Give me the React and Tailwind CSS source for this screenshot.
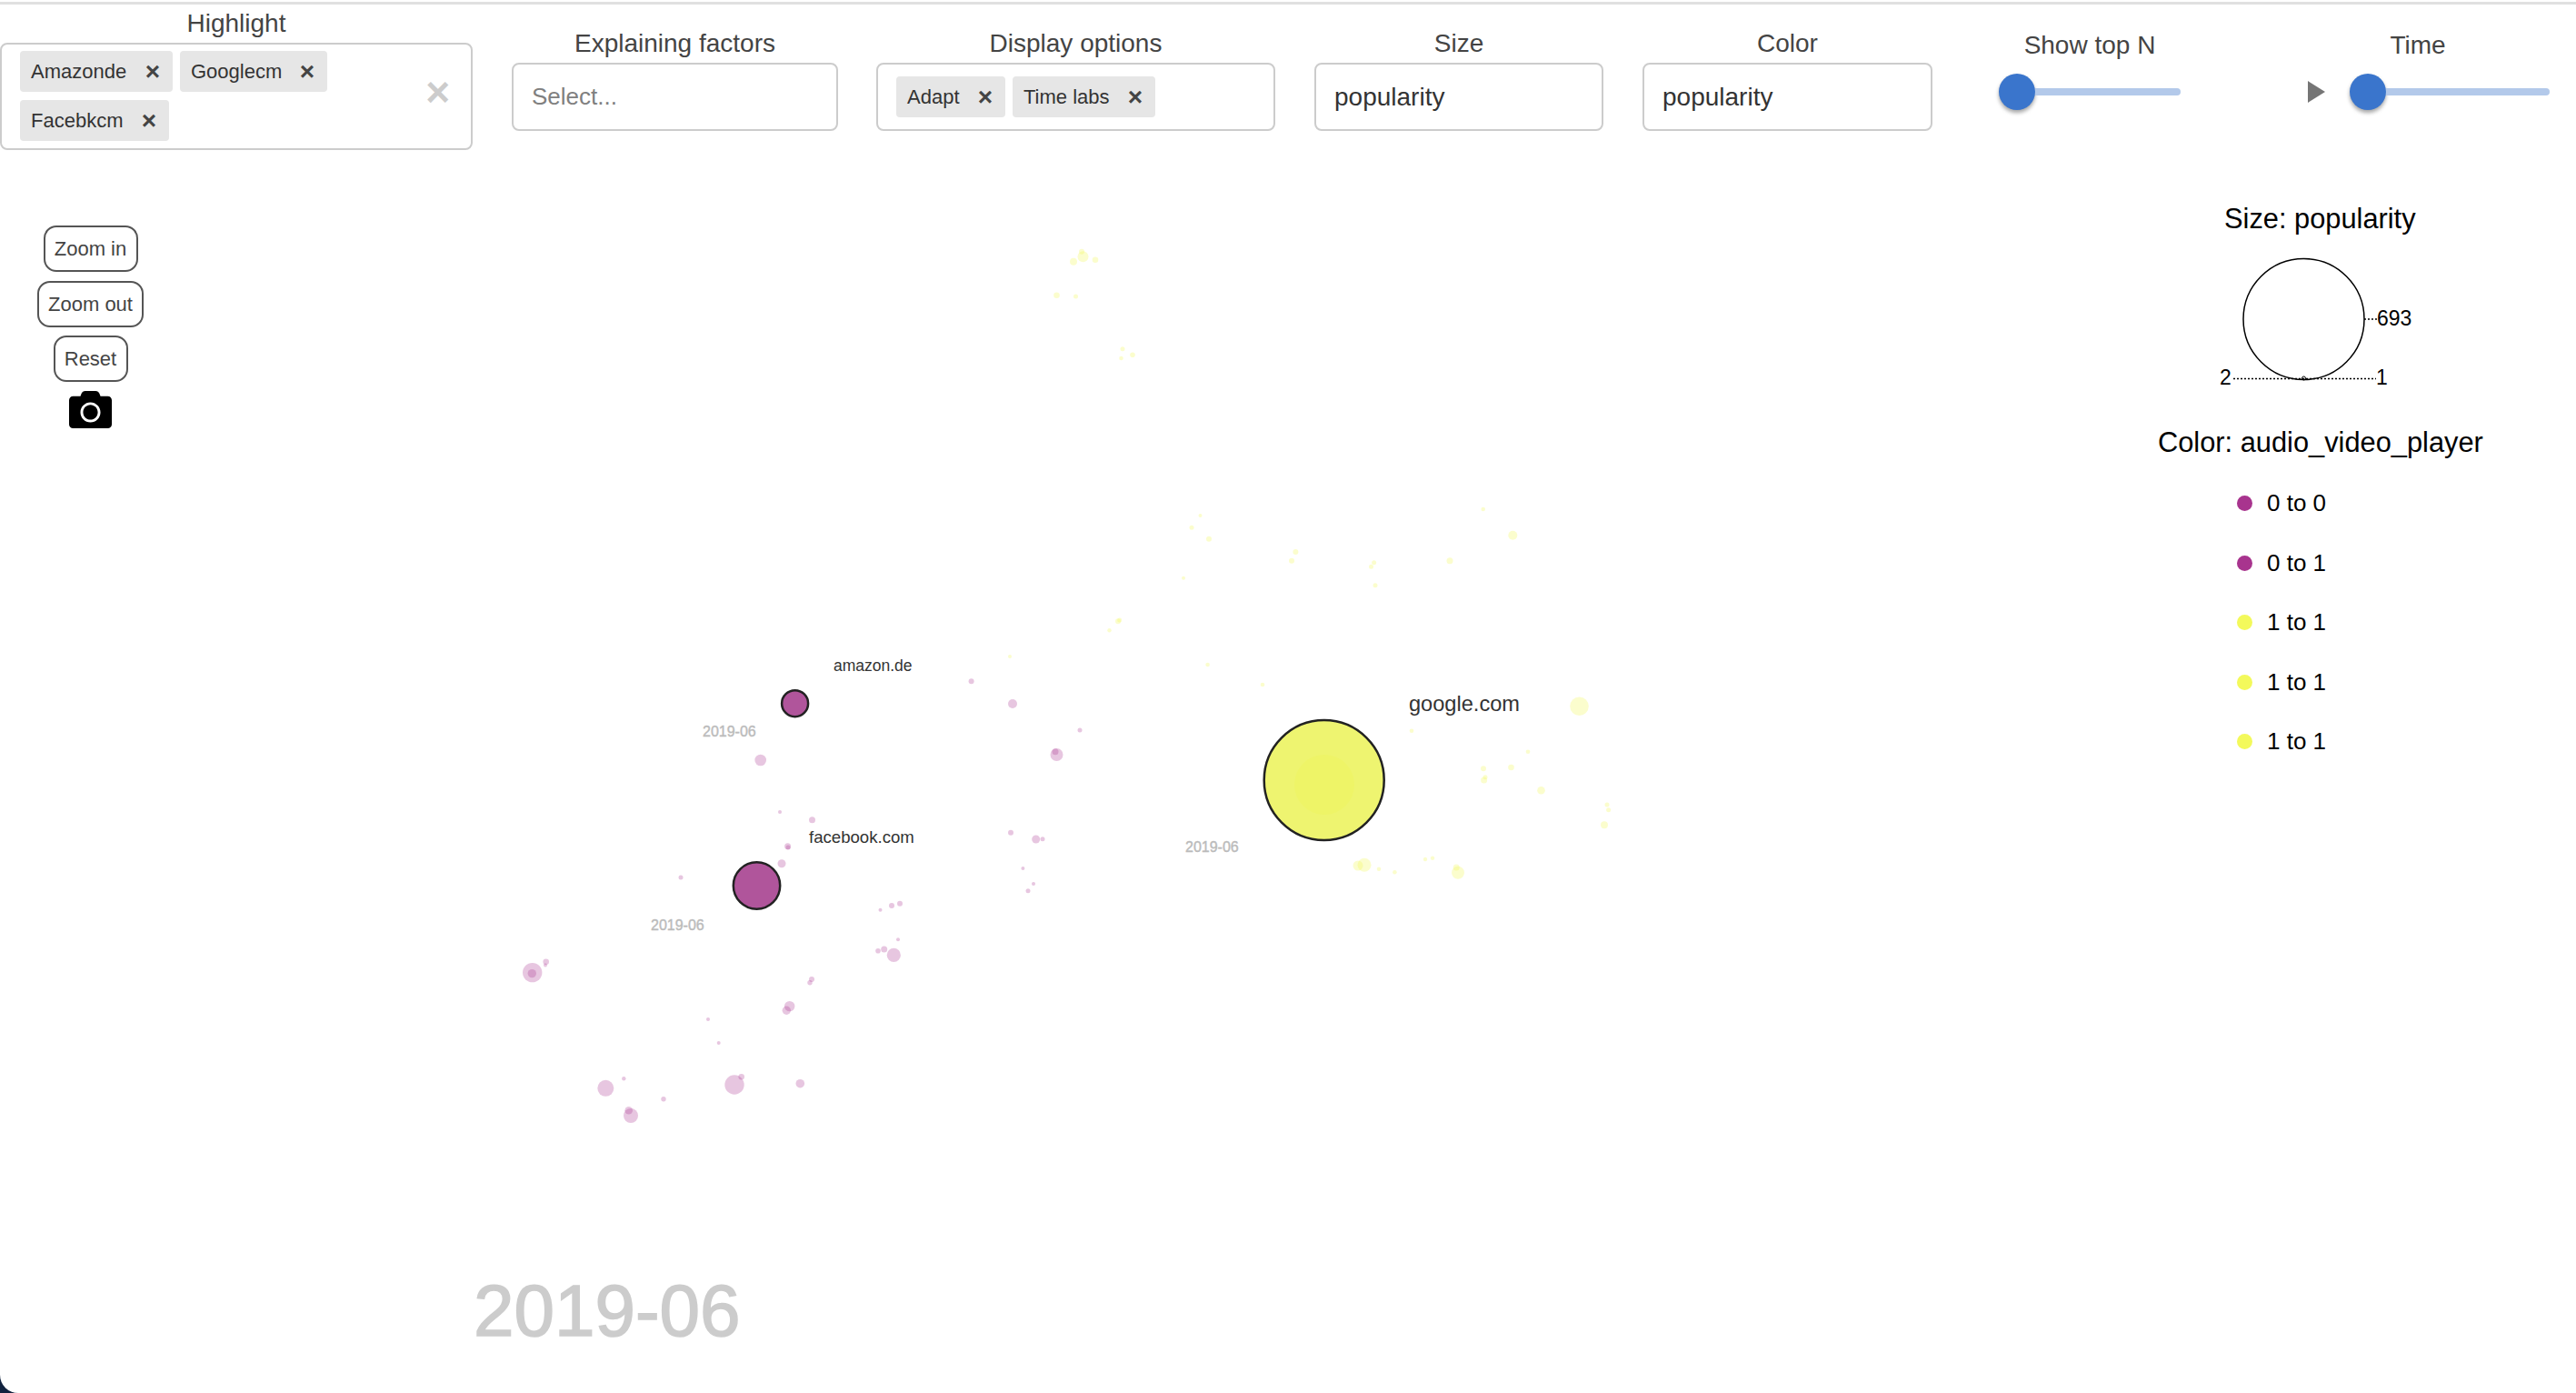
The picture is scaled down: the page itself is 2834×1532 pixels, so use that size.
import React from "react";
import { FaCamera } from "react-icons/fa";

const purple = [
  [836.7,836,6.3],[1068.6,749.3,3],[1114,774,5],[1188,803,2.5],[1162.5,830,7],[1161,826.7,3.5],
  [858,893,2],[893.5,901.7,3.5],[866.6,930.7,3.5],[867,932,2.5],[860,949.7,4.5],[749,965,2.5],
  [1112,915.7,3],[1139.7,923,4.5],[1147,922.7,2.5],[1125.4,955,2],[1137,972,2],[1131,979.7,2.5],
  [968.5,1000.7,2],[981,996,3],[990,993.7,3],[988,1033.3,2],[966,1045.8,2.8],[972.7,1044,3.5],[983.3,1050.4,7.6],
  [585.7,1069.6,10.7],[585.3,1070.6,4.7],[600.7,1057.7,3.3],[600,1061.4,2],
  [893,1077,3],[891,1080.8,2.7],[868.7,1106.6,5.7],[865.3,1111.3,4.7],[779,1121,2],[790.7,1147,2],
  [666.3,1196.8,9],[686.3,1186.3,2.2],[694,1227,8],[691.7,1221.2,4.3],[730,1208.7,2.7],[808,1193,10.7],[815.7,1184.3,3.3],[880.3,1191.7,4.8],
];

const yellow = [
  [1191.5,282.3,6],[1190,276.7,3],[1181,287.7,4],[1205,285.7,3.3],[1162.5,324.7,3.3],[1183.5,326,2.5],
  [1235,383.7,2.5],[1246,390.3,2.8],[1233.5,394,2.3],[1320.5,567,2],[1311,580.3,2.5],[1330,592.7,3],
  [1425.4,607,3],[1421,616.7,3],[1511.6,618.7,2.5],[1508.5,623.3,2.5],[1513,643.7,2.5],[1302,635.7,2],
  [1230,683.3,3],[1231.7,682,2.5],[1220.5,693.3,2.2],[1631.7,560,2.3],[1664.3,588.7,5],[1595,616.7,3.5],
  [1111,722,2],[1328.6,731,2.3],[1389,753,2.3],[1553,803.7,2.3],[1737.5,776.7,10.3],[1681,826.7,2.3],
  [1632,845.3,3],[1634,854.7,2.5],[1632.6,858,3.5],[1662.5,844,3.3],[1695.5,869.3,4.3],[1768,885,2.5],
  [1769.6,890.7,2.5],[1765,907.3,4],[1494,952,5.5],[1501,951.3,7.5],[1517,955.7,2.2],[1534.4,959.3,2.3],
  [1568,945,2.2],[1576,943.7,2.2],[1604,959.7,7],[1602.2,954,3.5],
];

function Chip({ label, className }) {
  return (
    <div className={"flex h-[45px] items-center rounded-[4px] bg-[#e6e6e6] pl-[12px] text-[22px] text-[#333] " + className}>
      <span>{label}</span>
      <span className="flex-1" />
      <span className="mr-[14px] text-[28px] leading-none font-bold text-[#444]">×</span>
    </div>
  );
}

function Label({ children }) {
  return <div className="mb-[5px] h-[32px] text-center text-[28px] leading-[32px] text-[#444]">{children}</div>;
}

function Box({ children, className = "" }) {
  return (
    <div className={"flex h-[75px] items-center rounded-[8px] border-2 border-[#ccc] bg-white " + className}>{children}</div>
  );
}

function Slider({ label, className, labelClass = "", trackClass, play }) {
  return (
    <div className={"flex flex-col " + className}>
      <div className={"h-[32px] text-center text-[28px] leading-[32px] text-[#444] " + labelClass}>{label}</div>
      <div className="mt-[15px] flex h-[40px] items-center">
        {play && (
          <svg width="20" height="24" viewBox="0 0 20 24" className="mr-[26px] shrink-0">
            <polygon points="0,0 19,12 0,24" fill="#757575" />
          </svg>
        )}
        <div className="h-[40px] w-[40px] shrink-0 rounded-full bg-[#3a75cc] shadow-[0_3px_4px_rgba(0,0,0,0.35)]" />
        <div className={"h-[8px] rounded-r-full bg-[#b3c9ea] " + trackClass} />
      </div>
    </div>
  );
}

function ToolButton({ children, className }) {
  return (
    <button className={"flex h-[51px] items-center justify-center rounded-[14px] border-2 border-[#555] bg-white text-[22px] text-[#444] " + className}>
      {children}
    </button>
  );
}

function LegendItem({ label, color }) {
  return (
    <div className="flex h-[65.5px] items-center">
      <span className={"h-[17px] w-[17px] rounded-full " + color} />
      <span className="ml-[16px] text-[26px] text-black">{label}</span>
    </div>
  );
}

export default function App() {
  return (
    <div className="h-[1532px] w-[2834px] overflow-hidden bg-[#12233f] font-['Liberation_Sans',Arial,sans-serif]">
      <div className="relative h-[1532px] w-[2834px] overflow-hidden rounded-bl-[20px] bg-white pt-[2px]">
        <svg width="2834" height="1532" viewBox="0 0 2834 1532" className="absolute top-0 left-0">
          {purple.map(([x, y, r], i) => (
            <circle key={i} cx={x} cy={y} r={r} fill="#a8348e" fillOpacity="0.28" />
          ))}
          {yellow.map(([x, y, r], i) => (
            <circle key={i} cx={x} cy={y} r={r} fill="#f3f95b" fillOpacity="0.3" />
          ))}
          <circle cx="874.6" cy="773.7" r="14.5" fill="#b0559b" stroke="#222" strokeWidth="2.5" />
          <circle cx="832.5" cy="974" r="25.7" fill="#b0559b" stroke="#222" strokeWidth="2.5" />
          <circle cx="1456.7" cy="858" r="66" fill="#eef470" stroke="#222" strokeWidth="2.5" />
          <circle cx="1457" cy="863" r="33" fill="#eef467" />
          <g fontFamily="Liberation Sans, Arial, sans-serif">
            <text x="917" y="738" fontSize="17.5" fill="#333">amazon.de</text>
            <text x="890" y="927" fontSize="18.6" fill="#333">facebook.com</text>
            <text x="1550" y="782" fontSize="23.6" fill="#333">google.com</text>
            <text x="773" y="810" fontSize="16" fill="#bbb" stroke="#bbb" strokeWidth="0.4">2019-06</text>
            <text x="716" y="1023" fontSize="16" fill="#bbb" stroke="#bbb" strokeWidth="0.4">2019-06</text>
            <text x="1304" y="937" fontSize="16" fill="#bbb" stroke="#bbb" strokeWidth="0.4">2019-06</text>
            <text x="521" y="1469" fontSize="80" fill="#ccc" stroke="#ccc" strokeWidth="1.5">2019-06</text>
          </g>
        </svg>

        <div className="relative h-[3px] bg-[#e0e0e0]" />

        <div className="relative flex h-[160px] items-start">
          <div className="mt-[5px] w-[520px]">
            <Label>Highlight</Label>
            <div className="relative flex h-[118px] flex-col gap-[9px] rounded-[8px] border-2 border-[#ccc] bg-white pt-[7px] pl-[20px]">
              <div className="flex gap-[8px]">
                <Chip label="Amazonde" className="w-[168px]" />
                <Chip label="Googlecm" className="w-[162px]" />
              </div>
              <Chip label="Facebkcm" className="w-[164px]" />
              <span className="absolute top-[22px] right-[23px] text-[46px] leading-[60px] font-bold text-[#ccc]">×</span>
            </div>
          </div>

          <div className="mt-[27px] ml-[43px] w-[359px]">
            <Label>Explaining factors</Label>
            <Box className="pl-[20px] text-[26px] text-[#808080]">Select...</Box>
          </div>

          <div className="mt-[27px] ml-[42px] w-[439px]">
            <Label>Display options</Label>
            <Box className="gap-[8px] pl-[20px]">
              <Chip label="Adapt" className="w-[120px]" />
              <Chip label="Time labs" className="w-[157px]" />
            </Box>
          </div>

          <div className="mt-[27px] ml-[43px] w-[318px]">
            <Label>Size</Label>
            <Box className="pl-[20px] text-[28px] text-[#333]">popularity</Box>
          </div>

          <div className="mt-[27px] ml-[43px] w-[319px]">
            <Label>Color</Label>
            <Box className="pl-[20px] text-[28px] text-[#333]">popularity</Box>
          </div>

          <Slider label="Show top N" className="mt-[29px] ml-[73px] w-[200px]" trackClass="w-[160px]" />
          <Slider label="Time" className="mt-[29px] ml-[140px] w-[266px]" labelClass="pr-[24px]" trackClass="w-[180px]" play />
        </div>

        <div className="relative flex justify-between">
          <div className="ml-[41px] flex w-[117px] flex-col items-center pt-[83px]">
            <ToolButton className="w-[104px]">Zoom in</ToolButton>
            <ToolButton className="mt-[10px] w-[117px]">Zoom out</ToolButton>
            <ToolButton className="mt-[9px] w-[82px]">Reset</ToolButton>
            <FaCamera className="mt-[7px] h-[47px] w-[47px] text-black" />
          </div>

          <div className="mr-[102px] flex w-[358px] flex-col pt-[56px]">
            <div className="ml-[73px] h-[40px] text-[30.8px] leading-[40px] text-black">Size: popularity</div>
            <svg width="300" height="165" viewBox="2400 270 300 165" className="mt-[9px] ml-[26px]">
              <circle cx="2534.5" cy="351" r="66.5" fill="none" stroke="#000" strokeWidth="1.5" />
              <circle cx="2534.5" cy="416" r="2" fill="none" stroke="#000" strokeWidth="1" />
              <line x1="2601" y1="351" x2="2615" y2="351" stroke="#000" strokeWidth="1.5" strokeDasharray="2 2" />
              <line x1="2457" y1="416.5" x2="2614" y2="416.5" stroke="#000" strokeWidth="1.5" strokeDasharray="2 2" />
              <g fontFamily="Liberation Sans, Arial, sans-serif" fontSize="23" fill="#000">
                <text x="2615" y="358">693</text>
                <text x="2442" y="423">2</text>
                <text x="2614" y="423">1</text>
              </g>
            </svg>
            <div className="mt-[32px] h-[40px] text-[30.8px] leading-[40px] text-black">Color: audio_video_player</div>
            <div className="mt-[14px] ml-[87px] flex flex-col">
              <LegendItem label="0 to 0" color="bg-[#a8348e]" />
              <LegendItem label="0 to 1" color="bg-[#a8348e]" />
              <LegendItem label="1 to 1" color="bg-[#f3f95b]" />
              <LegendItem label="1 to 1" color="bg-[#f3f95b]" />
              <LegendItem label="1 to 1" color="bg-[#f3f95b]" />
            </div>
          </div>
        </div>
      </div>
    </div>
  );
}
